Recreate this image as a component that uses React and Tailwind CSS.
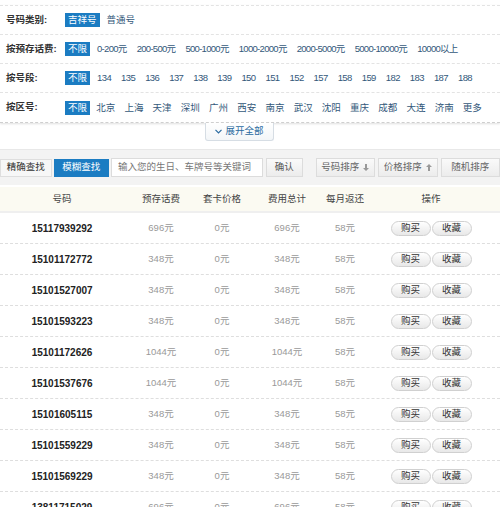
import React from "react";

const font = { fontFamily: '"Liberation Sans", "Noto Sans CJK SC", sans-serif' };

function FilterRow({ label, items, last, gap = "gap-[4px]", track = "" }) {
  return (
    <div className={`flex h-[29px] items-center ${last ? "" : "border-b border-dashed border-[#e3e3e3]"}`}>
      <div className="w-[65px] pl-[6px] text-[9.5px] font-bold text-[#333] whitespace-nowrap">{label}</div>
      <div className={`flex items-center ${gap} whitespace-nowrap`}>
        {items.map((it, i) => (
          <span
            key={i}
            className={`px-[3px] h-[14px] leading-[14px] text-[9.5px] ${i === 0 ? "bg-[#1b7cc2] text-white" : `text-[#33587a] ${track}`}`}
          >
            {it}
          </span>
        ))}
      </div>
    </div>
  );
}

const rows = [
  ["15117939292", "696元", "0元", "696元", "58元"],
  ["15101172772", "348元", "0元", "348元", "58元"],
  ["15101527007", "348元", "0元", "348元", "58元"],
  ["15101593223", "348元", "0元", "348元", "58元"],
  ["15101172626", "1044元", "0元", "1044元", "58元"],
  ["15101537676", "1044元", "0元", "1044元", "58元"],
  ["15101605115", "348元", "0元", "348元", "58元"],
  ["15101559229", "348元", "0元", "348元", "58元"],
  ["15101569229", "348元", "0元", "348元", "58元"],
  ["13811715029", "696元", "0元", "696元", "58元"],
];

const cols = "grid grid-cols-[124px_74px_48px_82px_34px_138px]";

function Arrow({ up }) {
  return (
    <svg width="6" height="7" viewBox="0 0 6 7" className="ml-[4px]">
      {up ? (
        <path d="M3 0 L6 3 H4 V7 H2 V3 H0 Z" fill="#999" />
      ) : (
        <path d="M3 7 L6 4 H4 V0 H2 V4 H0 Z" fill="#999" />
      )}
    </svg>
  );
}

function Pill({ children }) {
  return (
    <span className="flex h-[15px] w-[40px] items-center justify-center rounded-full border border-[#d0d0d0] bg-gradient-to-b from-white to-[#e8e8e8] text-[9.5px] text-[#333]">
      {children}
    </span>
  );
}

export default function App() {
  return (
    <div className="w-[500px] h-[507px] overflow-hidden bg-white" style={font}>
      <div className="pt-[5px]">
        <div className="border-t border-dashed border-[#e3e3e3] border-b border-b-[#cfcfcf] shadow-[0_1px_2px_rgba(0,0,0,0.12)]">
          <FilterRow label="号码类别:" items={["吉祥号", "普通号"]} />
          <FilterRow
            label="按预存话费:"
            track="tracking-[-0.7px]"
            items={["不限", "0-200元", "200-500元", "500-1000元", "1000-2000元", "2000-5000元", "5000-10000元", "10000以上"]}
          />
          <FilterRow
            label="按号段:"
            track="tracking-[-0.6px]"
            items={["不限", "134", "135", "136", "137", "138", "139", "150", "151", "152", "157", "158", "159", "182", "183", "187", "188"]}
          />
          <FilterRow
            label="按区号:"
            gap="gap-[3.2px]"
            items={["不限", "北京", "上海", "天津", "深圳", "广州", "西安", "南京", "武汉", "沈阳", "重庆", "成都", "大连", "济南", "更多"]}
            last
          />
        </div>
        <div className="h-[26px]">
          <div className="ml-[205px] flex h-[18px] w-[69px] items-center justify-center gap-[3px] rounded-b-[3px] border border-t-0 border-[#d6dde4] bg-gradient-to-b from-white to-[#f3f6f8] text-[9.5px] text-[#2a6aa0]">
            <svg width="7" height="5" viewBox="0 0 7 5"><path d="M0.5 0.8 L3.5 3.8 L6.5 0.8" stroke="#2a6aa0" strokeWidth="1.2" fill="none" /></svg>
            <span>展开全部</span>
          </div>
        </div>
      </div>

      <div className="flex h-[36px] items-center border-t border-[#e8e8e8] bg-[#f3f3f3] text-[9.5px]">
        <span className="flex h-[18px] w-[52px] items-center justify-center border border-[#dedede] bg-[#f7f7f7] text-[#333]">精确查找</span>
        <span className="ml-[2px] flex h-[18px] w-[56px] items-center justify-center bg-[#1b7cc2] text-white">模糊查找</span>
        <span className="ml-[2px] flex h-[19px] w-[153px] items-center border border-[#dcdcdc] bg-white pl-[6px] text-[#777]">输入您的生日、车牌号等关键词</span>
        <span className="ml-[3px] flex h-[19px] w-[37px] items-center justify-center border border-[#dcdcdc] bg-gradient-to-b from-[#fafafa] to-[#ececec] text-[#555]">确认</span>
        <span className="ml-[13px] flex h-[19px] w-[60px] items-center justify-center border border-[#dcdcdc] bg-gradient-to-b from-[#fafafa] to-[#ececec] text-[#666]">号码排序<Arrow /></span>
        <span className="ml-[3px] flex h-[19px] w-[60px] items-center justify-center border border-[#dcdcdc] bg-gradient-to-b from-[#fafafa] to-[#ececec] text-[#666]">价格排序<Arrow up /></span>
        <span className="ml-[3px] flex h-[19px] w-[60px] items-center justify-center border border-[#dcdcdc] bg-gradient-to-b from-[#fafafa] to-[#ececec] text-[#666]">随机排序</span>
      </div>

      <div className={`${cols} mt-[2px] h-[26px] items-center border-b-2 border-[#efefef] bg-[#fbfaf2] text-[9.5px] text-[#444]`}>
        {["号码", "预存话费", "套卡价格", "费用总计", "每月返还", "操作"].map((h) => (
          <div key={h} className="flex justify-center whitespace-nowrap">{h}</div>
        ))}
      </div>

      {rows.map((r) => (
        <div key={r[0]} className={`${cols} h-[31px] items-center border-b border-dashed border-[#dedede]`}>
          <div className="flex justify-center text-[10px] font-bold text-[#222]">{r[0]}</div>
          {r.slice(1).map((c, i) => (
            <div key={i} className="flex justify-center whitespace-nowrap text-[9.5px] text-[#999]">{c}</div>
          ))}
          <div className="flex justify-center gap-[1px]">
            <Pill>购买</Pill>
            <Pill>收藏</Pill>
          </div>
        </div>
      ))}
    </div>
  );
}
